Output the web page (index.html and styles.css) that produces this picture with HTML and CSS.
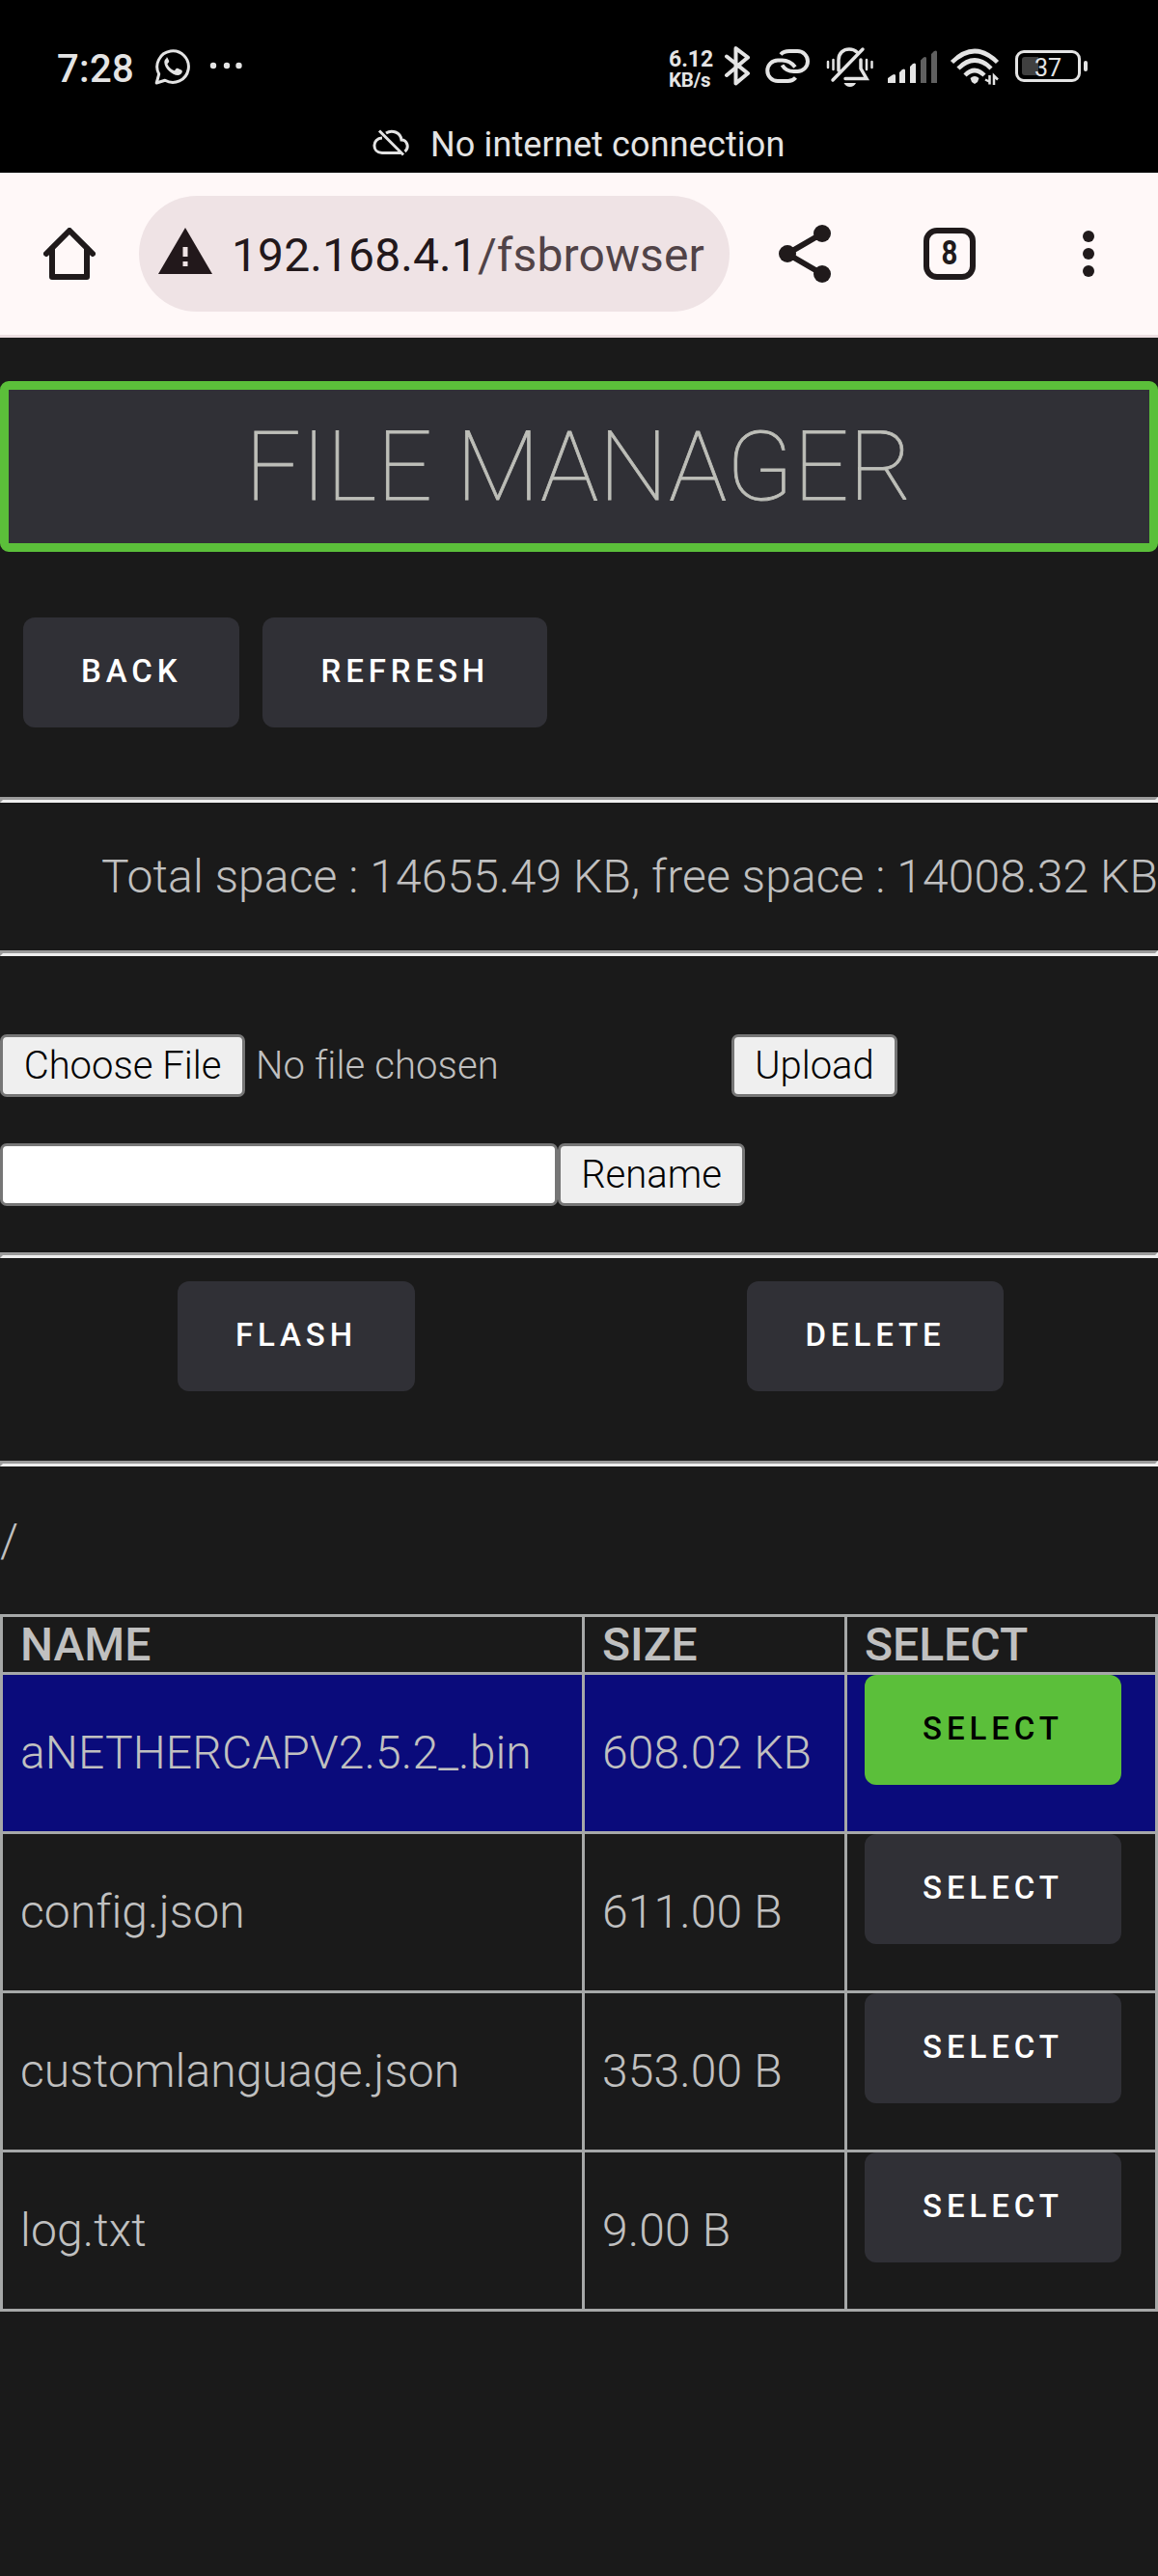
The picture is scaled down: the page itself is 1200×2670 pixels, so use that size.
FILE: index.html
```html
<!DOCTYPE html>
<html lang="en">
<head>
<meta charset="utf-8">
<title>File Manager</title>
<link rel="stylesheet" href="styles.css">
</head>
<body>
<header class="status">
  <div class="status-row">
    <span class="clock">7:28</span>
    <svg class="i-whatsapp" width="38" height="38" viewBox="0 0 38 38" fill="none" stroke="#e4e4e4" stroke-width="3"><path d="M2.2 36l2.5-9.2A16.3 16.3 0 1 1 11 33.3z" stroke-linejoin="round"/><path d="M12.5 10.5c-1 .5-2.2 2-2.2 4 0 6 8 13.500 14 13.500 2 0 4-1.500 4.500-3.500.2-1.200-.2-1.500-1-1.900l-3.800-1.800c-.7-.3-1.200-.1-1.600.5l-1.500 1.900c-3-.8-6.500-4.200-7.500-7l1.500-1.800c.4-.5.4-1 .2-1.500l-1.500-3c-.3-.5-.7-.6-1.100-.4z" fill="#e4e4e4" stroke="none"/></svg>
    <svg class="i-more" width="34" height="8" viewBox="0 0 34 8" fill="#e4e4e4"><circle cx="4" cy="4" r="3.200"/><circle cx="18" cy="4" r="3.200"/><circle cx="30.500" cy="4" r="3.200"/></svg>
    <div class="speed"><span>6.12</span><span class="unit">KB/s</span></div>
    <svg class="i-icons" width="386" height="46" viewBox="748 46 386 46" fill="none" stroke="#e4e4e4" stroke-width="4">
      <path d="M753 58.500l22 17.500-12.500 10.500v-36.500l12.500 9.500-22 18.500" stroke-linejoin="round" stroke-linecap="round"/>
      <g stroke-width="4"><path d="M809 56.500q3-3.500 9-3.500h8.500a10.500 10.500 0 0 1 0 21h-4q-8 0-12-6.500"/><path d="M824.500 80.500q-3 3.500-8 3.500h-10.500a10.500 10.500 0 0 1 0-21.500h4.500q8 0 13.500 7"/></g>
      <g stroke-width="3.500" stroke-linecap="round"><path d="M869 73V62c0-7 5-11 11-11 4 0 6 1 8 3M892 62v9l6 10.500h-22M894 51l-31 32"/><path d="M858 64v6M863.500 62v10M898 62v10M903.500 64v6" stroke-width="2.500"/></g>
      <path d="M874.500 86h12.500q-2 4-6.200 4t-6.300-4z" fill="#e4e4e4" stroke="none"/>
      <g fill="#e4e4e4" stroke="none"><path d="M920 81l5-3.500q3-1.500 3 1v7.500h-8zM932 75l3-3q3-1.500 3 1v13h-6zM943 69l3-3q3-1.500 3 1v19h-6z"/><path fill="#606060" d="M954 62.500l3-3q3-1.500 3 1v25.500h-6zM965 56l3-3q3-1.500 3 1v32h-6z"/></g>
      <g stroke-width="4.500"><path d="M986.500 64.500q23.500-23 47 0M993 71q17-17 34 0M1000 78q10-10 20 0"/></g><path d="M1005.500 81q4.500-4 9 0l-1.500 4-3 2-3-2z" fill="#e4e4e4" stroke="none"/>
      <path d="M1025.500 78v9.500M1021 82.500l4 2M1030 88v-9.500l4 4" stroke-width="2.500"/>
      <rect x="1053.500" y="53.500" width="65" height="30" rx="7.500" stroke-width="3"/><path d="M1062 59h14v19h-14q-3 0-3-3v-13q0-3 3-3z" fill="#404040" stroke="none"/><path d="M1125 65v7" stroke-width="4" stroke-linecap="round"/>
      <text x="1072" y="79" class="battery-text">37</text>
    </svg>
  </div>
  <div class="notice">
    <svg width="38" height="28" viewBox="0 0 38 28" fill="none" stroke="#e4e4e4" stroke-width="3"><path d="M7 1.500l25 25M29 24.500H10C-1 24 -.5 9.500 10 9M14 4c6-4 15-1 16 7 6 0 8.500 8 3.500 12"/></svg>
    <span>No internet connection</span>
  </div>
</header>
<nav class="toolbar">
  <svg class="i-home" width="54" height="54" viewBox="0 0 54 54" fill="none" stroke="#201a1b" stroke-width="6" stroke-linejoin="round" stroke-linecap="round"><path d="M3 27L27 3l24 24"/><path d="M9 22v29h36V22"/></svg>
  <div class="address">
    <svg width="56" height="48" viewBox="0 0 56 48"><path d="M28 0l28 48H0z" fill="#22181b"/><path d="M25.500 20h5v10h-5zM25.500 35h5v5h-5z" fill="#efe3e5"/></svg>
    <span class="url">192.168.4.1<span class="path">/fsbrowser</span></span>
  </div>
  <svg class="i-share" width="54" height="60" viewBox="0 0 54 60" fill="#201a1b" stroke="#201a1b"><path d="M45 9L9 30l36 21" fill="none" stroke-width="6"/><g stroke="none"><circle cx="45" cy="9" r="9"/><circle cx="9" cy="30" r="9"/><circle cx="45" cy="51" r="9"/></g></svg>
  <div class="tabs"><span class="tab-count">8</span></div>
  <svg class="i-menu" width="12" height="48" viewBox="0 0 12 48" fill="#201a1b"><circle cx="6" cy="6" r="6"/><circle cx="6" cy="24" r="6"/><circle cx="6" cy="42" r="6"/></svg>
</nav>
<main>
  <h1 class="title">FILE MANAGER</h1>
  <div class="actions"><button class="btn">BACK</button><button class="btn">REFRESH</button></div>
  <hr>
  <p class="space">Total space : 14655.49 KB, free space : 14008.32 KB</p>
  <hr>
  <div class="upload"><button class="native choose">Choose File</button><span class="chosen">No file chosen</span><button class="native up">Upload</button></div>
  <div class="rename"><input class="field" type="text" aria-label="New name"><button class="native ren">Rename</button></div>
  <hr>
  <div class="ops"><div><button class="btn">FLASH</button></div><div><button class="btn">DELETE</button></div></div>
  <hr>
  <p class="cwd">/</p>
  <table class="files">
    <colgroup><col class="c-name"><col class="c-size"><col class="c-select"></colgroup>
    <thead><tr><th>NAME</th><th>SIZE</th><th>SELECT</th></tr></thead>
    <tbody>
      <tr class="selected"><td>aNETHERCAPV2.5.2_.bin</td><td>608.02 KB</td><td><button class="btn">SELECT</button></td></tr>
      <tr><td>config.json</td><td>611.00 B</td><td><button class="btn">SELECT</button></td></tr>
      <tr><td>customlanguage.json</td><td>353.00 B</td><td><button class="btn">SELECT</button></td></tr>
      <tr><td>log.txt</td><td>9.00 B</td><td><button class="btn">SELECT</button></td></tr>
    </tbody>
  </table>
</main>
</body>
</html>
```

FILE: styles.css
```css
* { box-sizing: border-box; }
body { margin: 0; width: 1200px; min-height: 2670px; background: #1a1a1a; color: #c0c0c0; font: 300 48px/72px Roboto, sans-serif; }
svg { display: block; flex: none; }
button, input { font: inherit; margin: 0; }
p { margin: 0; }

.status { height: 179px; background: #000; color: #e4e4e4; font-weight: 400; }
.status-row { display: flex; align-items: flex-start; height: 126px; padding: 46px 0 0 59px; }
.clock { width: 101px; font-size: 40px; font-weight: 500; line-height: 52px; letter-spacing: .3px; white-space: nowrap; }
.i-whatsapp { margin-top: 4px; }
.i-more { margin: 18px 0 0 19px; }
.speed { display: flex; flex-direction: column; width: 55px; margin: 5px 0 0 442px; font-size: 23px; font-weight: 700; line-height: 22px; white-space: nowrap; }
.speed .unit { font-size: 20.500px; line-height: 20px; letter-spacing: -.2px; }
.battery-text { font: 400 25px Roboto, sans-serif; fill: #e4e4e4; stroke: none; }
.notice { display: flex; padding: 0 0 0 386px; font-size: 36px; line-height: 48px; letter-spacing: .13px; }
.notice svg { margin-top: 8px; }
.notice span { margin-left: 22px; white-space: nowrap; }

.toolbar { display: flex; align-items: center; height: 171px; padding: 0 0 0 45px; background: #fff8f8; border-bottom: 3px solid #ecdfe1; }
.address { display: flex; align-items: center; width: 612px; height: 120px; margin-left: 45px; padding-left: 20px; border-radius: 60px; background: #efe3e5; }
.address svg { margin-bottom: 7px; }
.url { margin-left: 20px; padding-top: 3px; color: #22181b; font-weight: 400; letter-spacing: .1px; white-space: nowrap; }
.url .path { color: #514347; }
.i-share { margin-left: 51px; }
.tabs { width: 54px; height: 54px; margin-left: 96px; border: 6px solid #201a1b; border-radius: 14px; color: #201a1b; font-size: 35px; font-weight: 700; line-height: 42px; text-align: center; }
.tab-count { display: block; transform: scaleX(.84); }
.i-menu { margin-left: 111px; }

.title { height: 177px; margin: 45px 0 0; border: 9px solid #5bbf3a; border-radius: 9px; background: #303036; color: #bdbeb8; font-size: 101px; font-weight: 100; line-height: 159px; letter-spacing: .1px; text-align: center; white-space: nowrap; -webkit-text-stroke: .8px #bdbeb8; }
.btn { display: block; height: 114px; padding: 0 60px 2px; border: 0; border-radius: 12px; background: #303036; color: #fff; font-size: 33px; font-weight: 500; line-height: 108px; letter-spacing: 4.900px; white-space: nowrap; }
.actions { display: flex; gap: 24px; height: 254px; padding: 68px 24px 0; }
hr { height: 6px; margin: 0; border: 3px solid; border-color: #9a9a9a #eee #eee #9a9a9a; }
.space { height: 153px; padding-top: 41px; letter-spacing: .12px; text-align: right; white-space: nowrap; }
.upload { display: flex; height: 194px; padding-top: 81px; font-size: 40px; line-height: 65px; }
.native { height: 65px; padding: 0; border: 3px solid #767676; border-radius: 7px; background: #efefef; color: #000; font-size: 40px; line-height: 57px; text-align: center; white-space: nowrap; }
.choose { width: 254px; }
.chosen { width: 491px; margin-left: 11px; letter-spacing: .12px; white-space: nowrap; }
.up { width: 172px; margin-left: 2px; }
.rename { display: flex; height: 113px; }
.field { width: 578px; height: 65px; border: 3px solid #767676; border-radius: 7px; background: #fff; }
.ren { width: 194px; }
.ops { display: grid; grid-template-columns: 614px 586px; height: 210px; padding-top: 24px; }
.ops > div { display: flex; justify-content: center; }
.cwd { height: 153px; padding-top: 41px; }

.files { width: 1200px; table-layout: fixed; border-spacing: 3px; background: #a6a8a8; letter-spacing: .12px; }
.c-name { width: 600px; }
.c-size { width: 269px; }
.c-select { width: 319px; }
.files th, .files td { padding: 0 0 0 18px; background: #1a1a1a; text-align: left; vertical-align: middle; white-space: nowrap; }
.files th { height: 57px; font-weight: 500; line-height: 57px; letter-spacing: 0; }
.files td { height: 162px; }
.files td:last-child { vertical-align: top; }
.files .selected td { background: #0a0b7b; }
.files .selected .btn { background: #5bbf3a; color: #000; }
```
